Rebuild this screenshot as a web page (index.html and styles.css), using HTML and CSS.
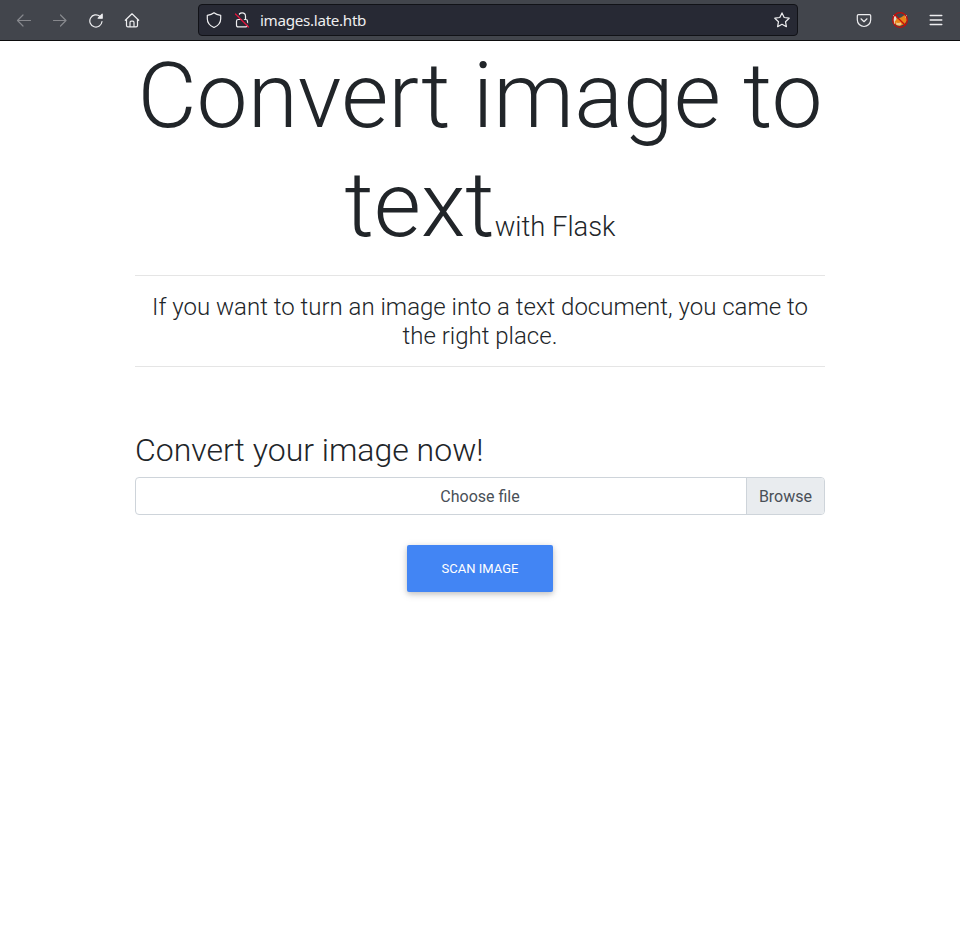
FILE: index.html
```html
<!DOCTYPE html>
<html lang="en">
<head>
<meta charset="utf-8">
<title>Convert image to text</title>
<link rel="stylesheet" href="styles.css">
</head>
<body>
<header class="toolbar">
  <nav class="nav">
    <svg class="icon dim" viewBox="0 0 16 16"><path d="M14.500 8.500h-13M7 3 1.500 8.500 7 14"/></svg>
    <svg class="icon dim" viewBox="0 0 16 16"><path d="M1.500 8.500h12.500M8.500 3 14 8.500 8.500 14"/></svg>
    <svg class="icon" viewBox="0 0 16 16"><path d="M11.900 4.300A6.100 6.100 0 1 0 14 9.500"/><path class="solid" d="M14.200 2.200v4h-4z"/></svg>
    <svg class="icon home" viewBox="0 0 16 16"><path d="M1.300 8.300 8 1.800l6.700 6.500M2.500 7.500v6q0 1.400 1.400 1.400h8.200q1.400 0 1.400-1.400v-6M6 14.800v-4.300q0-1.300 1.300-1.300h1.400q1.300 0 1.300 1.300v4.300"/></svg>
  </nav>
  <div class="address">
    <svg class="icon" viewBox="0 0 16 16"><path d="M8 .8Q10.300 2.800 14.700 3.300v3.500c0 4-2.700 7-6.700 8.700-4-1.700-6.700-4.700-6.700-8.700V3.300Q5.700 2.800 8 .8z"/></svg>
    <svg class="icon lock" viewBox="0 0 16 16"><path d="M4.700 4.200a3.400 3.400 0 0 1 6.800 0v3.300M4.200 7.500h7.600q1.700 0 1.700 1.700v4q0 1.700-1.700 1.700H4.200q-1.700 0-1.700-1.700v-4q0-1.700 1.700-1.700z"/><path class="gap" d="m2.500 1 13 13"/><path class="slash" d="m1.500 2 13 13"/></svg>
    <span class="url">images.late.htb</span>
    <svg class="icon" viewBox="0 0 16 16"><path d="m8 .9 2.200 4.600 5 .7-3.700 3.500.9 5L8 12.300l-4.400 2.400.9-5L.8 6.200l5-.7z"/></svg>
  </div>
  <div class="tools">
    <svg class="icon" viewBox="0 0 16 16"><path d="M2.500 2.600h11q1.200 0 1.200 1.200v4a6.700 6.700 0 0 1-13.400 0v-4q0-1.200 1.200-1.200zM5 6.800l3 2.900 3-2.900"/></svg>
    <svg class="icon" viewBox="0 0 16 16"><path class="ear" d="M1 3l3 1 1 4-3 5zM15 3l-3 1 2 6z"/><path class="fox" d="M2.500 10 5 6.500 9 5.500 12.500 3 15 8.500 12.500 12 8 14 4 13z"/><path class="muzzle" d="m4 10.500 2 .5 3-.5.500 2-2 1-3-.5z"/><circle class="ban" cx="8" cy="8" r="7.300"/><path class="ban" d="m3 3 10 10"/></svg>
    <svg class="icon menu" viewBox="0 0 16 16"><path d="M2.200 3.500h11.600M2.200 8h11.600M2.200 12.500h11.600"/></svg>
  </div>
</header>
<main class="container">
  <h1 class="title">Convert image to text<small>with Flask</small></h1>
  <p class="lead">If you want to turn an image into a text document, you came to the right place.</p>
  <h2 class="subtitle">Convert your image now!</h2>
  <div class="file"><span class="choose">Choose file</span><span class="browse">Browse</span></div>
  <button class="scan">SCAN IMAGE</button>
</main>
</body>
</html>
```
FILE: styles.css
```css
*{box-sizing:border-box}
body{margin:0;min-height:100vh;background:#fff;color:#212529;font-family:Roboto,sans-serif;font-weight:300}
.toolbar{height:41px;background:#42454c;border-bottom:1px solid #0c0c0d;display:grid;grid-template-columns:198px 600px 1fr;align-items:center}
.nav{display:flex;gap:20px;padding-left:16px}
.icon{width:16px;height:16px;flex:none;fill:none;stroke:#eeeef0;stroke-width:1.200;stroke-linecap:round;stroke-linejoin:round;display:block}
.dim{opacity:.4}
.solid{fill:#eeeef0}
.home{margin-left:-.5px}
.address{height:32px;background:#272934;border:1px solid #111217;border-radius:4px;display:flex;align-items:center;padding:0 7px}
.lock{margin-left:12px}
.gap{stroke:#272934;stroke-width:1.500}
.slash{stroke:#e2143c;stroke-width:1.300}
.url{flex:1;margin-left:10px;color:#eeeef0;font:400 15.200px/20px "Noto Sans",sans-serif;letter-spacing:-.3px}
.tools{display:flex;gap:20px;justify-content:flex-end;padding-right:16px}
.ear{fill:#e8d9c5;stroke:none}
.fox{fill:#e98518;stroke:none}
.muzzle{fill:#efc88c;stroke:none}
.ban{stroke:#c90c08;stroke-width:1.300}
.menu{stroke-width:1.400}
.container{width:690px;margin:0 auto;text-align:center}
.title{margin:0;font-size:91.200px;line-height:109px;font-weight:300}
.title small{font-size:27.360px;line-height:1}
.lead{margin:16px 0 0;padding:17px 0 15px;border:solid #e5e5e5;border-width:1px 0;font-size:24px;line-height:29px}
.subtitle{margin:64px 0 8px;text-align:left;font-size:32px;line-height:38px;font-weight:300}
.file{height:38px;border:1px solid #ced4da;border-radius:4px;display:flex;position:relative;justify-content:flex-end;color:#495057;font-weight:400;font-size:16px;line-height:38px;overflow:hidden}
.choose{position:absolute;inset:0}
.browse{padding:0 12px;border-left:1px solid #ced4da;background:#e9ecef}
.scan{display:block;margin:30px auto 0;width:146px;height:47px;border:0;border-radius:2px;background:#4285f4;color:#fff;font:400 13px Roboto,sans-serif;box-shadow:0 2px 5px rgba(0,0,0,.16),0 2px 10px rgba(0,0,0,.12)}
```
